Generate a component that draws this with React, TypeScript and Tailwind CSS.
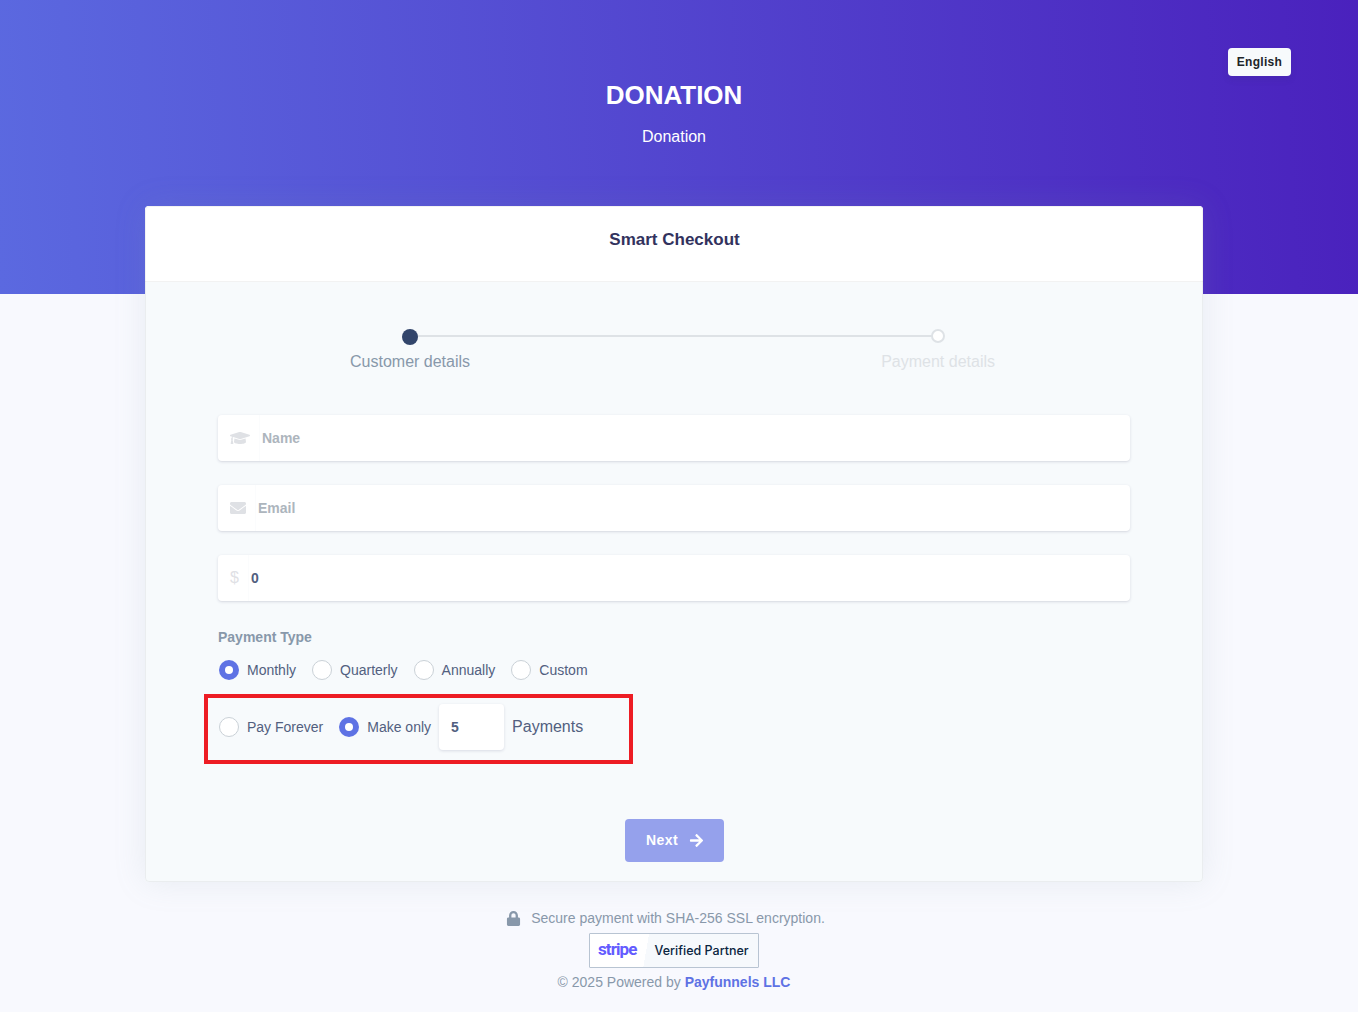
import { FaArrowRight, FaEnvelope, FaGraduationCap, FaLock } from "react-icons/fa";

function Radio({ label, checked }: { label: string; checked?: boolean }) {
  return (
    <label className="flex items-center text-[14px] leading-5 text-[#525f7f]">
      {checked ? (
        <span className="flex h-5 w-5 items-center justify-center rounded-full bg-[#5e72e4]">
          <span className="h-2 w-2 rounded-full bg-white" />
        </span>
      ) : (
        <span className="h-5 w-5 rounded-full border border-[#cad1d7] bg-white" />
      )}
      <span className="ml-[8px]">{label}</span>
    </label>
  );
}

function Field({
  icon,
  value,
  placeholder,
  addon,
}: {
  icon: React.ReactNode;
  value?: string;
  placeholder?: string;
  addon: string;
}) {
  return (
    <div className="flex h-[46px] items-center rounded-[4px] bg-white text-[14px] font-bold shadow-[0_1px_3px_rgba(50,50,93,0.15),0_1px_0_rgba(0,0,0,0.02)]">
      <span className={`flex h-full items-center border-r border-[#fbfcfd] pl-3 text-[#dfe1e5] ${addon}`}>{icon}</span>
      <span className={`ml-[2px] ${value ? "text-[#525f7f]" : "text-[#adb5bd]"}`}>{value || placeholder}</span>
    </div>
  );
}

export default function App() {
  return (
    <div className="min-h-[1012px] bg-[#f8f9fe] font-['Liberation_Sans',Arial,sans-serif]">
      <div className="relative h-[294px] bg-[linear-gradient(87deg,#5b69e0_0%,#4a21bd_100%)] pt-[79px] text-white">
        <div className="w-[1348px] text-center">
          <h1 className="text-[26px] leading-[33px] font-bold">DONATION</h1>
          <p className="mt-[13px] text-[16px] leading-6">Donation</p>
        </div>
        <button className="absolute top-[48px] left-[1228px] h-7 w-[63px] rounded-[4px] bg-[#f7fafc] text-[12px] font-bold tracking-[0.3px] text-[#212529] shadow-[0_4px_6px_rgba(50,50,93,0.11)]">
          English
        </button>
      </div>

      <div className="relative w-[1348px]">
        <div className="mx-auto -mt-[88px] h-[676px] w-[1058px] overflow-hidden rounded-[4px] bg-[#f7fafc] shadow-[0_0_32px_rgba(136,152,170,0.15)] outline -outline-offset-1 outline-[rgba(0,0,0,0.05)]">
          <div className="h-[76px] border-b border-[rgba(0,0,0,0.05)] bg-white pt-[23px] pl-[1px] text-center text-[17px] leading-[22px] font-bold text-[#32325d]">
            Smart Checkout
          </div>

          <div className="px-[73px]">
            <div className="relative ml-[132px] h-[133px] w-[645px] text-[16px] text-[#8898aa]">
              <div className="absolute top-[53px] left-[59px] h-[2px] w-[528px] bg-[#dee2e6]" />
              <div className="absolute top-[47px] left-[52px] h-4 w-4 rounded-full bg-[#32456b]" />
              <div className="absolute top-[47px] left-[581px] h-[14px] w-[14px] rounded-full border-2 border-[#dee2e6] bg-white" />
              <div className="absolute top-[68px] left-0 w-[120px] text-center leading-6 whitespace-nowrap">Customer details</div>
              <div className="absolute top-[68px] right-0 text-center leading-6 whitespace-nowrap text-[#dee2e6]">Payment details</div>
            </div>

            <div className="flex flex-col gap-6">
              <Field icon={<FaGraduationCap className="text-[20px]" />} placeholder="Name" addon="w-[42px]" />
              <Field icon={<FaEnvelope className="text-[16px]" />} placeholder="Email" addon="w-[38px]" />
              <Field icon={<span className="text-[16px] font-normal">$</span>} value="0" addon="w-[31px]" />
            </div>

            <p className="mt-[27px] text-[14px] leading-[18px] font-bold text-[#8898aa]">Payment Type</p>
            <div className="mt-[14px] flex gap-4 pl-[1px]">
              <Radio label="Monthly" checked />
              <Radio label="Quarterly" />
              <Radio label="Annually" />
              <Radio label="Custom" />
            </div>

            <div className="mt-[14px] -ml-[14px] flex h-[70px] w-[429px] items-center gap-4 border-4 border-[#ed1c24] pb-[4px] pl-[11px]">
              <Radio label="Pay Forever" />
              <div className="flex items-center">
                <Radio label="Make only" checked />
                <div className="ml-2 flex h-[46px] w-[65px] items-center rounded-[4px] bg-white pl-3 text-[14px] font-bold text-[#525f7f] shadow-[0_1px_3px_rgba(50,50,93,0.15)]">
                  5
                </div>
                <span className="ml-2 text-[16px] text-[#525f7f]">Payments</span>
              </div>
            </div>

            <div className="mt-[55px] flex justify-center">
              <button className="flex h-[43px] w-[99px] items-center justify-center gap-[11px] rounded-[4px] bg-[#95a1ec] pl-[2px] text-[14px] font-bold tracking-[0.4px] text-white">
                Next <FaArrowRight className="text-[15px]" />
              </button>
            </div>
          </div>
        </div>

        <div className="mt-[25px] flex flex-col items-center text-[14px] text-[#8898aa]">
          <div className="flex h-[22px] items-center pr-[17px]">
            <FaLock className="mr-[10px] text-[15px]" />
            Secure payment with SHA-256 SSL encryption.
          </div>
          <div className="mt-[4px] flex h-[35px] w-[170px] items-center rounded-[1px] border border-[#b8c4d2] bg-[linear-gradient(100deg,#ffffff_0%,#ffffff_34%,#f6f9fc_34%)]">
            <span className="ml-2 pb-[2px] font-['Roboto',sans-serif] text-[17px] leading-none font-bold tracking-[-0.9px] text-[#635bff]">stripe</span>
            <span className="ml-[18px] pt-[2px] font-['Inter',sans-serif] text-[12.5px] font-medium text-[#0a2540]">Verified Partner</span>
          </div>
          <div className="mt-[3px] leading-[22px]">
            © 2025 Powered by <span className="font-bold text-[#5e72e4]">Payfunnels LLC</span>
          </div>
        </div>
      </div>
    </div>
  );
}
